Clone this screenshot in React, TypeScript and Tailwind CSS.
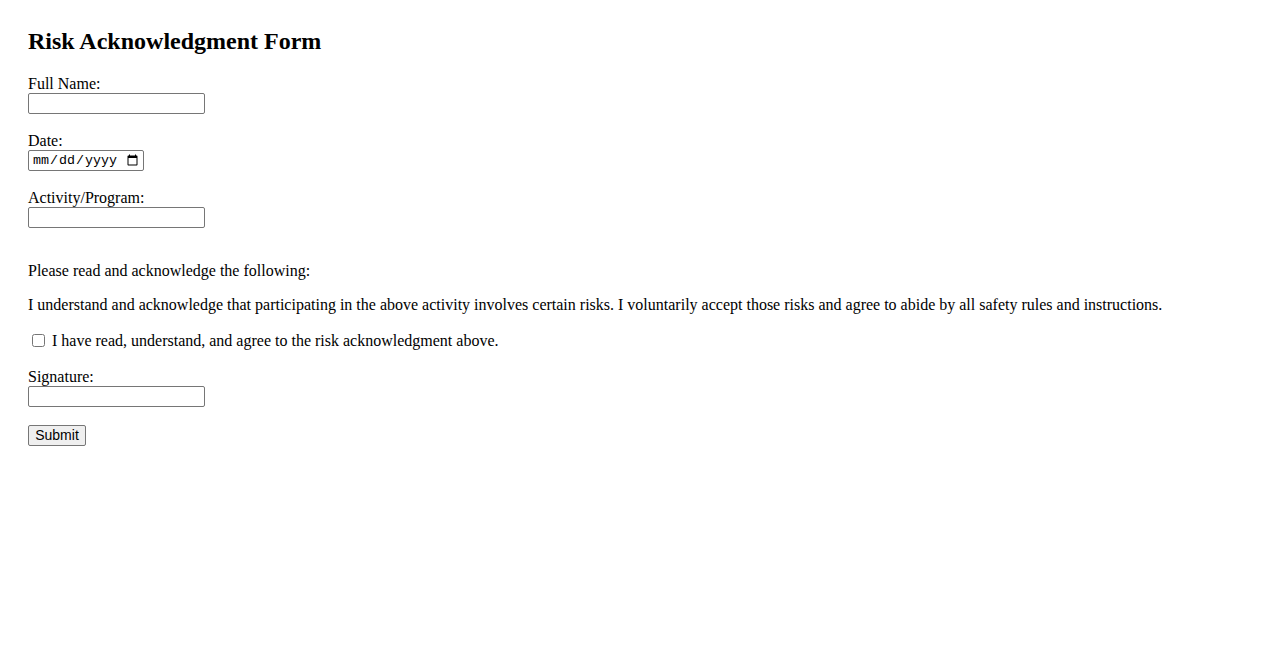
import React from "react";

const inputCls =
  "block w-[177px] h-[21px] border border-[#767676] rounded-[2px] px-[2px] py-[1px] text-[13.33px] bg-white";

export default function App() {
  return (
    <div
      className="min-h-[650px] bg-white text-black px-[28px] pt-[27px] text-[16px] leading-[18px]"
      style={{ fontFamily: '"Liberation Serif", "Times New Roman", serif' }}
    >
      <h2 className="text-[24px] font-bold leading-[28px]">Risk Acknowledgment Form</h2>
      <form className="flex flex-col items-start" onSubmit={(e) => e.preventDefault()}>
        <label className="block mt-[20px]">Full Name:</label>
        <input type="text" className={inputCls} style={{ fontFamily: '"Liberation Sans", Arial, sans-serif' }} />

        <label className="block mt-[18px]">Date:</label>
        <input
          type="date"
          className="block w-[116px] h-[21px] border border-[#767676] rounded-[2px] pl-[3px] pr-[2px] text-[13.33px] bg-white"
          style={{ fontFamily: '"Liberation Mono", monospace' }}
        />

        <label className="block mt-[18px]">Activity/Program:</label>
        <input type="text" className={inputCls} style={{ fontFamily: '"Liberation Sans", Arial, sans-serif' }} />

        <p className="mt-[34px]">Please read and acknowledge the following:</p>
        <p className="mt-[16px]">
          I understand and acknowledge that participating in the above activity involves certain risks. I voluntarily
          accept those risks and agree to abide by all safety rules and instructions.
        </p>

        <div className="mt-[18px] flex items-center h-[18px]">
          <input type="checkbox" className="w-[13px] h-[13px] ml-[4px] mr-[7px] -mt-[2px]" />
          <span>I have read, understand, and agree to the risk acknowledgment above.</span>
        </div>

        <label className="block mt-[18px]">Signature:</label>
        <input type="text" className={inputCls} style={{ fontFamily: '"Liberation Sans", Arial, sans-serif' }} />

        <button
          type="submit"
          className="mt-[18px] h-[21px] w-[58px] border border-[#767676] rounded-[2px] bg-[#efefef] text-[14px] leading-[15px]"
          style={{ fontFamily: '"Liberation Sans", Arial, sans-serif' }}
        >
          Submit
        </button>
      </form>
    </div>
  );
}
